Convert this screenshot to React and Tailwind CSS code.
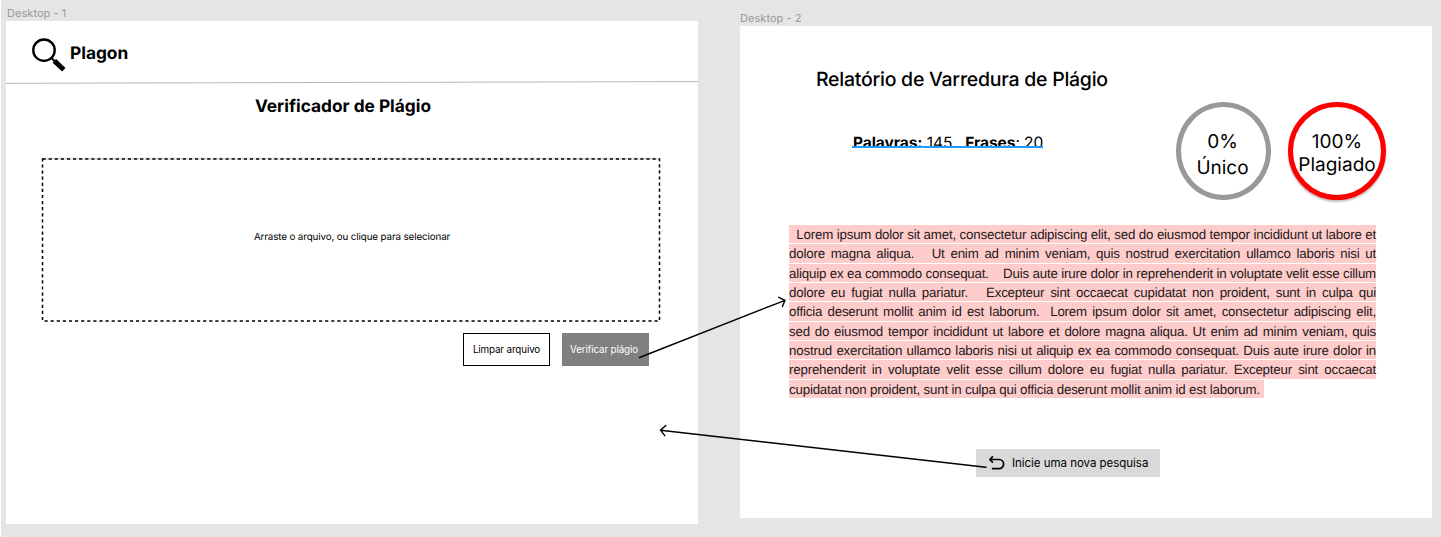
const reportLines = [
  "\u00a0 Lorem ipsum dolor sit amet, consectetur adipiscing elit, sed do eiusmod tempor incididunt ut labore et",
  "dolore magna aliqua. \u00a0 Ut enim ad minim veniam, quis nostrud exercitation ullamco laboris nisi ut",
  "aliquip ex ea commodo consequat. \u00a0\u00a0 Duis aute irure dolor in reprehenderit in voluptate velit esse cillum",
  "dolore eu fugiat nulla pariatur. \u00a0 Excepteur sint occaecat cupidatat non proident, sunt in culpa qui",
  "officia deserunt mollit anim id est laborum. \u00a0Lorem ipsum dolor sit amet, consectetur adipiscing elit,",
  "sed do eiusmod tempor incididunt ut labore et dolore magna aliqua. Ut enim ad minim veniam, quis",
  "nostrud exercitation ullamco laboris nisi ut aliquip ex ea commodo consequat. Duis aute irure dolor in",
  "reprehenderit in voluptate velit esse cillum dolore eu fugiat nulla pariatur. Excepteur sint occaecat",
];

const lastLine = "cupidatat non proident, sunt in culpa qui officia deserunt mollit anim id est laborum.";

function MagnifierIcon() {
  return (
    <svg className="h-[36px] w-[36px] shrink-0" viewBox="0 0 36 36" fill="none" stroke="#000">
      <circle cx="13" cy="12.2" r="10.7" strokeWidth="2.4" />
      <path d="M20.2 19.7L24 23.5" strokeWidth="2" />
      <path d="M23.4 22.9L32.8 31.8" strokeWidth="5" />
    </svg>
  );
}

function UndoIcon() {
  return (
    <svg className="h-[16px] w-[17px] shrink-0" viewBox="0 0 17 16" fill="none" stroke="#000" strokeWidth="1.7" strokeLinecap="round" strokeLinejoin="round">
      <path d="M4.4 1.9L1.9 4.5L4.4 7.1" />
      <path d="M2.2 4.5H11A4.6 4.6 0 0 1 11 13.7H4.6" />
    </svg>
  );
}

function UploadScreen() {
  return (
    <section className="w-[692px]">
      <div className="h-[21px] pt-[6px] pl-px text-[11px] leading-[14px] tracking-[0.05px] text-[#999999]">Desktop - 1</div>
      <div className="flex h-[503px] flex-col bg-white">
        <header className="flex h-[60px] pt-[17px] pl-[25px]">
          <MagnifierIcon />
          <span className="mt-[5px] ml-[3px] text-[17.3px] leading-[21px] font-bold">Plagon</span>
        </header>
        <svg className="h-[3px] w-full" viewBox="0 0 692 3" preserveAspectRatio="none">
          <path d="M0 2.3L692 0.6" stroke="#b4b4b4" strokeWidth="1" />
        </svg>
        <h1 className="mt-[12px] pr-[18px] text-center text-[17.3px] leading-[22px] font-bold">Verificador de Plágio</h1>
        <div className="mt-[39px] ml-[35px] flex h-[165px] w-[620px] items-center justify-center">
          <svg className="absolute h-[165px] w-[620px]" fill="none">
            <path d="M0.8 1.8H618.7" stroke="#dedede" strokeWidth="2" />
            <rect x="1.5" y="2" width="617" height="162" stroke="#000" strokeWidth="1.5" strokeDasharray="3.2 2.9" />
          </svg>
          <p className="mb-[4px] pl-[2px] text-[9.8px] leading-[12px] tracking-[-0.12px]">Arraste o arquivo, ou clique para selecionar</p>
        </div>
        <div className="mt-[11px] flex justify-end gap-[12px] pr-[49px]">
          <button className="h-[33px] w-[87px] border border-black bg-white pt-[2px] text-[9.8px] tracking-[-0.12px]">Limpar arquivo</button>
          <button className="h-[33px] w-[87px] bg-[#808080] pt-[2px] pr-[3px] text-[9.8px] tracking-[-0.12px] text-white">Verificar plágio</button>
        </div>
      </div>
    </section>
  );
}

function ReportScreen() {
  return (
    <section className="w-[692px] pt-[5px]">
      <div className="h-[21px] pt-[6px] text-[11px] leading-[14px] tracking-[0.05px] text-[#999999]">Desktop - 2</div>
      <div className="flex h-[492px] flex-col bg-white">
        <div className="flex h-[199px] justify-between pr-[46px] pl-[76px]">
          <div className="pt-[41px]">
            <h2 className="text-[19.5px] leading-[25px] font-medium tracking-[-0.26px] whitespace-nowrap">Relatório de Varredura de Plágio</h2>
            <div className="relative mt-[41px] ml-[36px] w-[191px] pl-px text-[15.5px] leading-[19px] tracking-[-0.06px] whitespace-pre">
              <b>Palavras:</b> 145{"   "}<b>Frases</b>: 20
              <span className="absolute top-[13px] left-0 h-[8px] w-[191px] border-t-2 border-[#1f9bff] bg-white" />
            </div>
          </div>
          <div className="flex gap-[17px] pt-[76px]">
            <div className="flex h-[98px] w-[95px] flex-col items-center justify-center rounded-[50%] border-[5px] border-[#999999] pt-[8px] pr-[2px] text-[19px] leading-[26px]">
              <span>0%</span>
              <span>Único</span>
            </div>
            <div className="flex h-[98px] w-[98px] flex-col items-center justify-center rounded-[50%] border-[5px] border-[#ff0000] pt-[3px] text-[19px] leading-[23px] shadow-[0_2px_2px_rgba(0,0,0,0.25)]">
              <span>100%</span>
              <span>Plagiado</span>
            </div>
          </div>
        </div>
        <div className="ml-[49px] flex w-[587px] flex-col gap-px font-['Liberation_Sans',Arial,sans-serif] text-[13.3px] leading-[19.6px] tracking-[-0.185px] text-[#241a1a]">
          {reportLines.map((line) => (
            <p key={line} className="h-[18.35px] bg-[#ffcccc] whitespace-nowrap [text-align-last:justify]">{line}</p>
          ))}
          <p className="h-[18.35px] w-[475px] bg-[#ffcccc] whitespace-nowrap">{lastLine}</p>
        </div>
        <button className="mt-[51px] ml-[236px] flex h-[28px] w-[184px] items-center bg-[#d9d9d9] pl-[12px] text-[11.5px] tracking-[-0.03px] whitespace-nowrap">
          <UndoIcon />
          <span className="mt-[2px] ml-[7px]">Inicie uma nova pesquisa</span>
        </button>
      </div>
    </section>
  );
}

function FlowArrows() {
  return (
    <svg className="pointer-events-none absolute inset-0 h-[537px] w-[1441px]" fill="none" stroke="#000" strokeWidth="1.4" strokeLinecap="round">
      <path d="M638.5 357.5L784 300.3M777.8 297.3L784 300.3L781.4 306.6" />
      <path d="M985 467.3L659.5 430.2M664.8 425.5L659.5 430.2L663.8 435.6" />
    </svg>
  );
}

export default function App() {
  return (
    <main className="relative flex h-[537px] w-[1441px] gap-[42px] overflow-hidden border-l border-white bg-[#e5e5e5] pl-[5px] font-['Inter',sans-serif] text-black [text-rendering:geometricPrecision]">
      <UploadScreen />
      <ReportScreen />
      <FlowArrows />
    </main>
  );
}
